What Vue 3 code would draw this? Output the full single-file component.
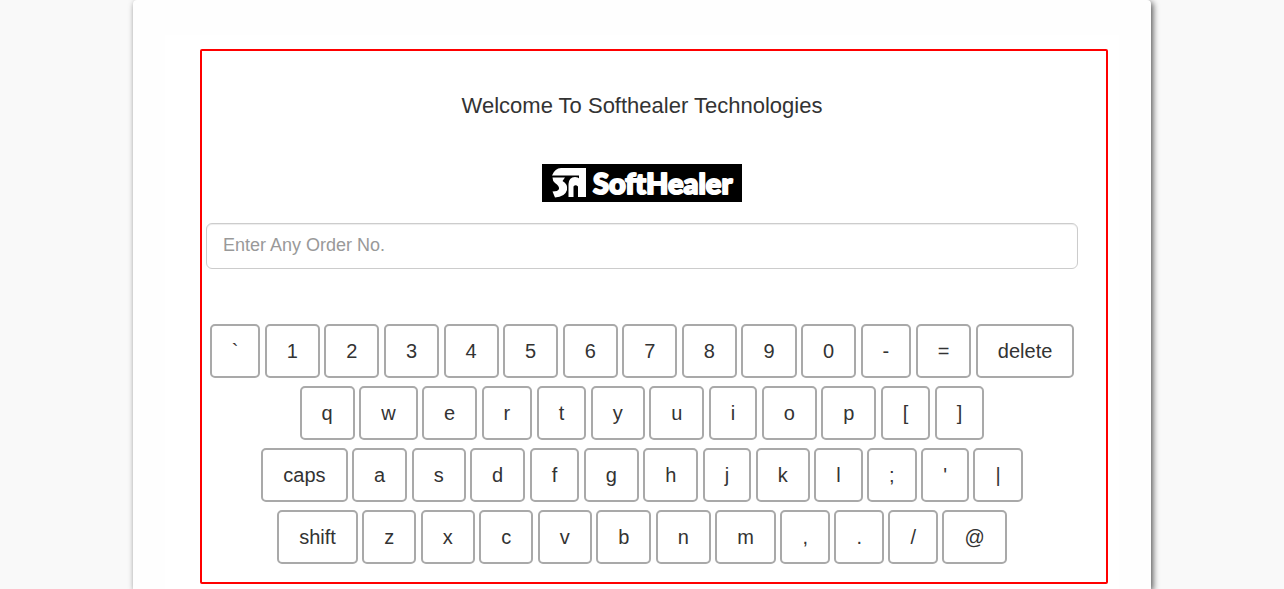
<script setup>
import { ref } from 'vue'

const order = ref('')
const caps = ref(false)
const rows = [
  ['`', '1', '2', '3', '4', '5', '6', '7', '8', '9', '0', '-', '=', 'delete'],
  ['q', 'w', 'e', 'r', 't', 'y', 'u', 'i', 'o', 'p', '[', ']'],
  ['caps', 'a', 's', 'd', 'f', 'g', 'h', 'j', 'k', 'l', ';', "'", '|'],
  ['shift', 'z', 'x', 'c', 'v', 'b', 'n', 'm', ',', '.', '/', '@'],
]

function press(key) {
  if (key === 'delete') order.value = order.value.slice(0, -1)
  else if (key === 'caps' || key === 'shift') caps.value = !caps.value
  else order.value += caps.value ? key.toUpperCase() : key
}
</script>

<template>
  <main class="card">
    <div class="panel">
      <section class="frame">
        <h1 class="title">Welcome To Softhealer Technologies</h1>
        <svg class="logo" viewBox="0 0 200 38" role="img" aria-label="SoftHealer">
          <rect width="200" height="38" fill="#000" />
          <path d="M10 11.500Q13 4 19 4H44V33H37V11.500Z" fill="#fff" />
          <path d="M10.500 13.500H23L20.500 17Q26 20 25 26Q23 33 13 33.500L10.500 27.500Q16 27.500 17 25Q17.500 22 13 19Q10.500 17 10.500 13.500Z" fill="#fff" />
          <path d="M26.500 33V20Q27 13 33 13Q36 13 38 15V33H36V22.500Q33.500 20 31.500 22.500V33Z" fill="#fff" />
          <text x="51" y="30" class="wordmark">SoftHealer</text>
        </svg>
        <input v-model="order" class="order" type="text" aria-label="Order number" placeholder="Enter Any Order No." />
        <div class="keyboard">
          <div v-for="(row, i) in rows" :key="i" class="row">
            <template v-for="key in row" :key="key"><button class="key" type="button" @click="press(key)">{{ key }}</button>{{ ' ' }}</template>
          </div>
        </div>
      </section>
    </div>
  </main>
</template>

<style>
body {
  background: #f9f9f9;
}
</style>

<style scoped>
.card {
  box-sizing: border-box;
  min-height: 100vh;
  margin: 0 133px;
  padding: 35px 32px 0;
  border-radius: 4px 4px 0 0;
  background: #fefefe;
  box-shadow: 2px 2px 6px #555;
  color: #333;
  font-family: "Liberation Sans", Arial, sans-serif;
}

.panel {
  padding: 14px 11px 5px 35px;
  background: #fff;
}

.frame {
  display: flex;
  flex-direction: column;
  align-items: center;
  padding: 40px 28px 18px 4px;
  border: 2px solid #f00;
  border-radius: 2px;
}

.title {
  margin: 0;
  font-size: 22px;
  font-weight: 400;
  line-height: 30px;
}

.logo {
  width: 200px;
  height: 38px;
  margin: 43px 0 21px;
}

.wordmark {
  fill: #fff;
  stroke: #fff;
  stroke-width: 2;
  stroke-linejoin: round;
  font-family: Lato, sans-serif;
  font-size: 29px;
  font-weight: 900;
}

.order {
  box-sizing: border-box;
  width: 100%;
  height: 46px;
  padding: 8px 16px 10px;
  border: 1px solid #ccc;
  border-radius: 6px;
  background: #fff;
  box-shadow: inset 0 1px 1px rgba(0, 0, 0, 0.075);
  color: #555;
  font-family: inherit;
  font-size: 18px;
}

.order::placeholder {
  color: #999;
}

.keyboard {
  display: flex;
  flex-direction: column;
  gap: 8px;
  margin-top: 55px;
}

.row {
  font-size: 16px;
  line-height: 20px;
  text-align: center;
  white-space: nowrap;
}

.key {
  height: 54px;
  padding: 0 20px;
  border: 2px solid #a9a9a9;
  border-radius: 5px;
  background: #fff;
  color: #333;
  font-family: inherit;
  font-size: 20px;
  vertical-align: top;
}
</style>
